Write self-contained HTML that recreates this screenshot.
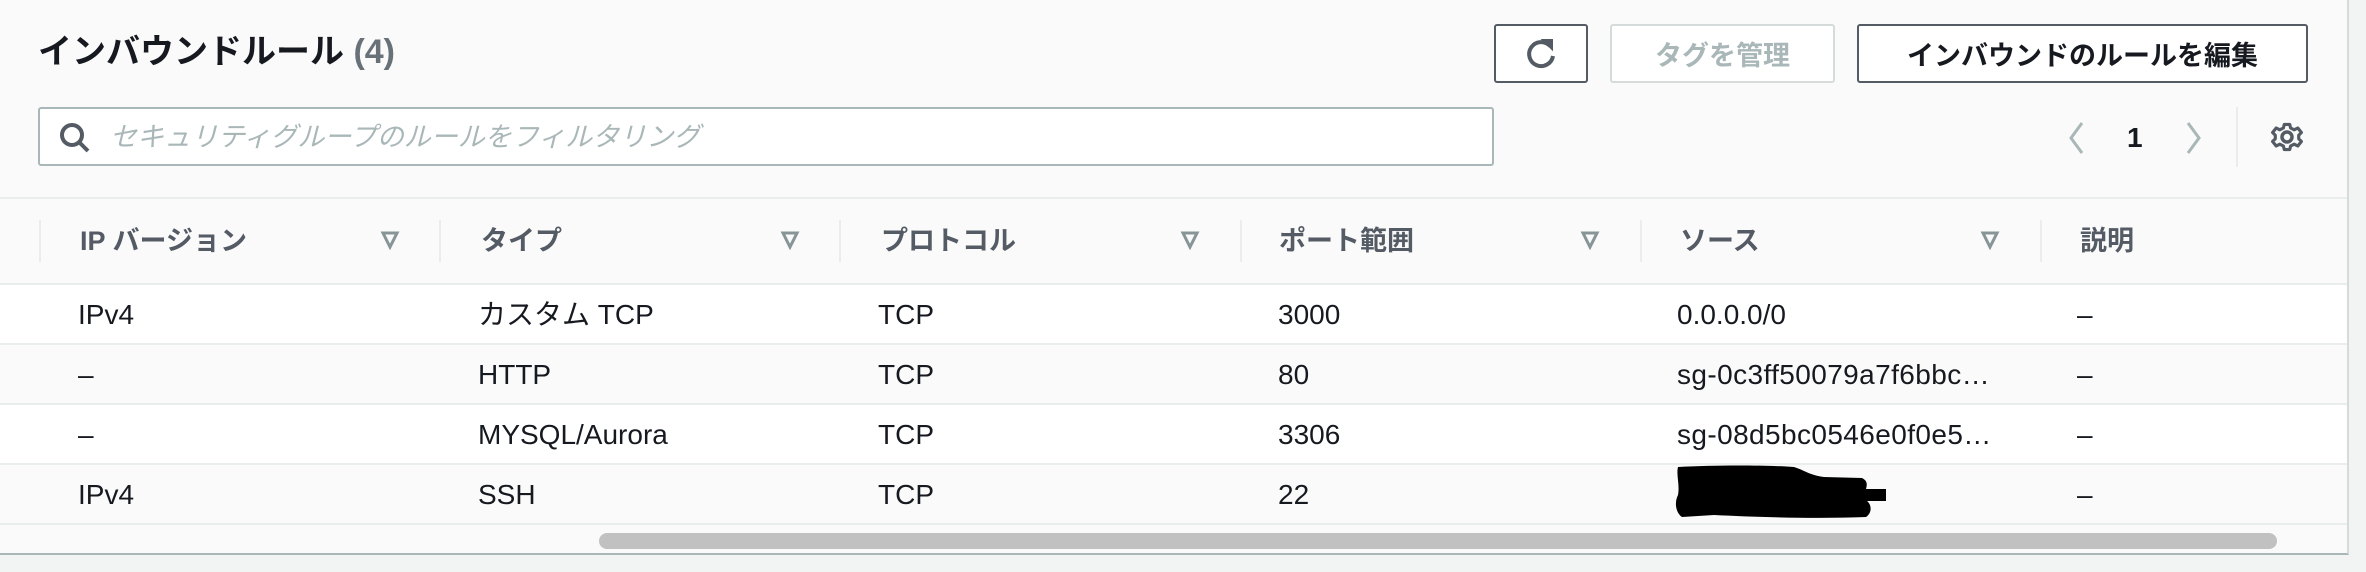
<!DOCTYPE html>
<html><head><meta charset="utf-8"><style>
*{margin:0;padding:0;box-sizing:border-box}
body{width:2366px;height:572px;background:#f2f3f3;font-family:"Liberation Sans","Noto Sans CJK JP",sans-serif;color:#16191f;position:relative;overflow:hidden}
.panel{position:absolute;left:0;top:0;width:2349px;height:555px;background:#fafafa;border-right:2px solid #d5dbdb;border-bottom:2px solid #aab7b8;overflow:hidden}
.abs{position:absolute}
.title{left:38px;top:30px;font-size:34px;font-weight:bold;line-height:44px;white-space:nowrap}
.title span{color:#687078}
.btn{position:absolute;top:24px;height:59px;border:2px solid #545b64;border-radius:3px;background:#fff;font-size:27px;font-weight:bold;color:#545b64;display:flex;align-items:center;justify-content:center}
.search{left:38px;top:107px;width:1456px;height:59px;border:2px solid #aab7b8;border-radius:3px;background:#fff}
.search .ph{position:absolute;left:70px;top:10px;font-size:27px;color:#aab7b8;font-style:italic;line-height:36px}
.hline{position:absolute;left:0;width:2349px;height:2px;background:#eaeded}
.th{position:absolute;top:223px;font-size:27px;font-weight:bold;color:#545b64;line-height:36px;white-space:nowrap}
.vd{position:absolute;top:220px;width:2px;height:42px;background:#eaeded}
.tri{position:absolute;top:230px}
.row{position:absolute;left:0;width:2349px;height:60px;border-bottom:2px solid #eaeded}
.td{position:absolute;top:12px;font-size:28px;line-height:36px;height:36px;color:#16191f;white-space:nowrap}
</style></head><body>
<div class="panel">
<div class="abs title">インバウンドルール <span>(4)</span></div>
<div class="btn" style="left:1494px;width:94px"><svg width="34" height="36" viewBox="0 0 34 36"><path d="M26 10A12 12 0 1 0 29 20" fill="none" stroke="#545b64" stroke-width="4"/><path d="M19 4L28 4L28 13Z" fill="#545b64" stroke="#545b64" stroke-width="2"/></svg></div>
<div class="btn" style="left:1610px;width:225px;border-color:#d5dbdb;color:#aab7b8">タグを管理</div>
<div class="btn" style="left:1857px;width:451px;color:#16191f">インバウンドのルールを編集</div>
<div class="abs search"><svg class="abs" style="left:18px;top:12px" width="34" height="34" viewBox="0 0 34 34"><circle cx="14" cy="14" r="10" fill="none" stroke="#545b64" stroke-width="4"/><path d="M21 21L30 30" stroke="#545b64" stroke-width="4"/></svg><div class="ph">セキュリティグループのルールをフィルタリング</div></div>
<svg class="abs" style="left:2066px;top:120px" width="20" height="36" viewBox="0 0 20 36"><path d="M16 3L5 18L16 33" fill="none" stroke="#aab7b8" stroke-width="3"/></svg>
<div class="abs" style="left:2127px;top:122px;font-size:28px;font-weight:bold">1</div>
<svg class="abs" style="left:2184px;top:120px" width="20" height="36" viewBox="0 0 20 36"><path d="M4 3L15 18L4 33" fill="none" stroke="#aab7b8" stroke-width="3"/></svg>
<div class="abs" style="left:2236px;top:107px;width:2px;height:60px;background:#eaeded"></div>
<svg class="abs" style="left:2270px;top:120px" width="34" height="34" viewBox="0 0 34 34"><circle cx="17" cy="17" r="5" fill="none" stroke="#545b64" stroke-width="3.5"/><path d="M14 3h6l1 4 4 2 4-2 4 5-3 3v4l3 3-4 5-4-2-4 2-1 4h-6l-1-4-4-2-4 2-4-5 3-3v-4l-3-3 4-5 4 2 4-2z" fill="none" stroke="#545b64" stroke-width="3.5" stroke-linejoin="round" transform="translate(17 17) scale(0.9) translate(-17 -17)"/></svg>
<div class="hline" style="top:197px"></div>
<div class="vd" style="left:39px"></div><div class="vd" style="left:439px"></div><div class="vd" style="left:839px"></div><div class="vd" style="left:1240px"></div><div class="vd" style="left:1640px"></div><div class="vd" style="left:2040px"></div>
<div class="th" style="left:80px">IP バージョン</div>
<div class="th" style="left:481px">タイプ</div>
<div class="th" style="left:881px">プロトコル</div>
<div class="th" style="left:1279px">ポート範囲</div>
<div class="th" style="left:1680px">ソース</div>
<div class="th" style="left:2080px">説明</div>
<svg class="tri" style="left:380px" width="20" height="20"><path d="M3 3H17L10 17Z" fill="none" stroke="#879596" stroke-width="3"/></svg>
<svg class="tri" style="left:780px" width="20" height="20"><path d="M3 3H17L10 17Z" fill="none" stroke="#879596" stroke-width="3"/></svg>
<svg class="tri" style="left:1180px" width="20" height="20"><path d="M3 3H17L10 17Z" fill="none" stroke="#879596" stroke-width="3"/></svg>
<svg class="tri" style="left:1580px" width="20" height="20"><path d="M3 3H17L10 17Z" fill="none" stroke="#879596" stroke-width="3"/></svg>
<svg class="tri" style="left:1980px" width="20" height="20"><path d="M3 3H17L10 17Z" fill="none" stroke="#879596" stroke-width="3"/></svg>
<div class="hline" style="top:283px"></div>
<div class="row" style="top:285px;background:#fff"><div class="td" style="left:78px">IPv4</div><div class="td" style="left:478px">カスタム TCP</div><div class="td" style="left:878px">TCP</div><div class="td" style="left:1278px">3000</div><div class="td" style="left:1677px">0.0.0.0/0</div><div class="td" style="left:2077px">–</div></div>
<div class="row" style="top:345px;background:#fafafa"><div class="td" style="left:78px">–</div><div class="td" style="left:478px">HTTP</div><div class="td" style="left:878px">TCP</div><div class="td" style="left:1278px">80</div><div class="td" style="left:1677px;letter-spacing:0.4px">sg-0c3ff50079a7f6bbc…</div><div class="td" style="left:2077px">–</div></div>
<div class="row" style="top:405px;background:#fff"><div class="td" style="left:78px">–</div><div class="td" style="left:478px">MYSQL/Aurora</div><div class="td" style="left:878px">TCP</div><div class="td" style="left:1278px">3306</div><div class="td" style="left:1677px;letter-spacing:0.4px">sg-08d5bc0546e0f0e5…</div><div class="td" style="left:2077px">–</div></div>
<div class="row" style="top:465px;background:#fafafa"><div class="td" style="left:78px">IPv4</div><div class="td" style="left:478px">SSH</div><div class="td" style="left:878px">TCP</div><div class="td" style="left:1278px">22</div><div class="td" style="left:2077px">–</div>
<svg class="abs" style="left:1674px;top:0" width="240" height="56"><path d="M4 2C40 0 90 0 120 2C130 5 135 10 150 12L188 13C194 16 193 20 192 24L212 24L212 36L193 36C198 40 198 48 192 52C140 54 80 52 40 50L8 52C2 48 0 38 4 30C6 20 2 10 4 2Z" fill="#000"/></svg></div>
<div class="abs" style="left:599px;top:533px;width:1678px;height:16px;border-radius:8px;background:#c1c1c1"></div>
</div>
</body></html>
